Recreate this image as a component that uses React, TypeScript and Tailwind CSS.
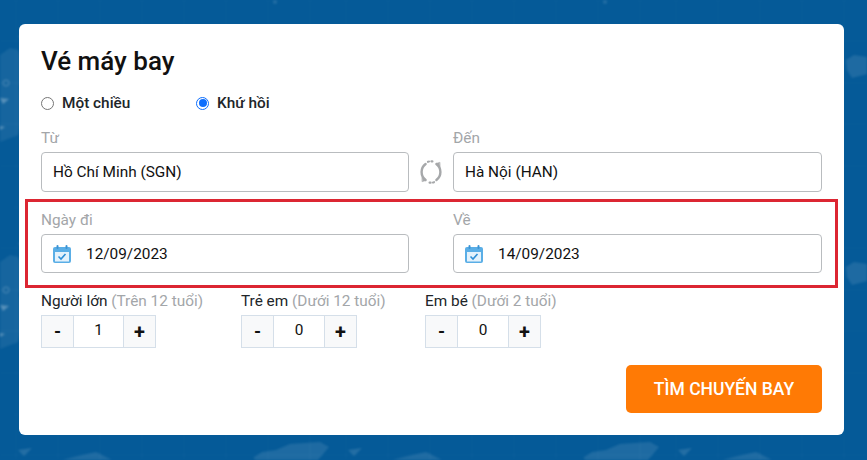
const font = { fontFamily: 'Roboto, "Noto Sans", sans-serif' };

function MapBackground() {
  return (
    <svg className="absolute inset-0" width="867" height="460" viewBox="0 0 867 460">
      <defs>
        <pattern id="map" width="330" height="207" patternUnits="userSpaceOnUse">
          <path d="M0 0H330M0 41H330M0 83H330M0 124H330M0 166H330" stroke="#ffffff" strokeOpacity="0.025" />
          <path d="M16 0V207M58 0V207M100 0V207M142 0V207M184 0V207M226 0V207M268 0V207M310 0V207" stroke="#ffffff" strokeOpacity="0.03" />
          {/* left land mass */}
          <path d="M0 55 L10 48 L18 50 L24 64 L19 88 L24 112 L18 135 L0 142 Z" fill="#ffffff" fillOpacity="0.07" />
          <circle cx="6" cy="83" r="3" fill="none" stroke="#ffffff" strokeOpacity="0.22" />
          <path d="M0 98 L9 99 L3 104 Z M0 126 L5 127 L0 130 Z" fill="#ffffff" fillOpacity="0.28" />
          {/* right land mass */}
          <path d="M186 60 L194 55 L207 57 L215 66 L207 74 L192 78 L187 70 Z" fill="#ffffff" fillOpacity="0.1" />
          {/* bottom land masses */}
          <path d="M253 44 L262 38 L276 36 L290 30 L320 28 L329 33 L318 46 L300 50 L262 50 Z" fill="#ffffff" fillOpacity="0.1" />
          <path d="M62 46 L78 42 L96 38 L112 46 L100 50 L62 50 Z" fill="#ffffff" fillOpacity="0.1" />
          <path d="M18 36 L32 34 L24 42 Z" fill="#ffffff" fillOpacity="0.12" />
          <circle cx="275" cy="2" r="2" fill="#ffffff" fillOpacity="0.12" />
        </pattern>
      </defs>
      <rect width="867" height="460" fill="url(#map)" className="blur-[1px]" />
    </svg>
  );
}

function CalendarIcon() {
  return (
    <svg width="20" height="20" viewBox="0 0 20 20" className="shrink-0">
      <rect x="1" y="3" width="18" height="16" rx="2" fill="#5aaee6" />
      <rect x="3" y="8" width="14" height="9.5" fill="#e4f2fc" />
      <rect x="4.5" y="1" width="2" height="4" rx="1" fill="#3c94d4" />
      <rect x="13.5" y="1" width="2" height="4" rx="1" fill="#3c94d4" />
      <path d="M6.5 12.5 L9 15 L13.5 10" fill="none" stroke="#2f8fd6" strokeWidth="1.6" />
    </svg>
  );
}

function SwapIcon() {
  return (
    <svg width="24" height="24" viewBox="0 0 24 24" fill="none" stroke="#a6a8aa" strokeLinecap="round">
      <path d="M6.6 20 A10 10 0 0 1 6.6 4" strokeWidth="2.4" />
      <path d="M17.4 4 A10 10 0 0 1 17.4 20" strokeWidth="2.4" />
      <path d="M9 1.8 A10 10 0 0 1 15 1.8" strokeWidth="2.2" strokeDasharray="1 2.4" />
      <path d="M15 22.2 A10 10 0 0 1 9 22.2" strokeWidth="2.2" strokeDasharray="1 2.4" />
      <path d="M3.2 17.5 L6.8 20.6 L3.4 21.6 Z" fill="#a6a8aa" strokeWidth="0.6" />
      <path d="M20.8 6.5 L17.2 3.4 L20.6 2.4 Z" fill="#a6a8aa" strokeWidth="0.6" />
    </svg>
  );
}

function Stepper({ label, hint, value, width, boxWidth }: { label: string; hint: string; value: number; width: string; boxWidth: string }) {
  return (
    <div className={width}>
      <div className="text-[15.36px] leading-[18px] text-[#212529]">
        {label} <span className="text-[#a3a6a9]">{hint}</span>
      </div>
      <div className={`mt-[5px] flex h-[33px] border border-[#d5dfe9] text-[#111] ${boxWidth}`}>
        <div className="flex w-[31px] items-center justify-center bg-[#f8f9fa] text-[18px] font-bold">-</div>
        <div className="flex flex-1 items-center justify-center border-x border-[#d5dfe9] pb-[2px] text-[15.36px]">{value}</div>
        <div className="flex w-[31px] items-center justify-center bg-[#f8f9fa] text-[20px] font-bold">+</div>
      </div>
    </div>
  );
}

function Radio({ label, checked, width }: { label: string; checked?: boolean; width: string }) {
  return (
    <label className={`flex items-center gap-[8px] ${width}`}>
      {checked ? (
        <span className="flex h-[13px] w-[13px] items-center justify-center rounded-full border-[1.5px] border-[#0d6efd] bg-white">
          <span className="h-[8px] w-[8px] rounded-full bg-[#0d6efd]" />
        </span>
      ) : (
        <span className="h-[13px] w-[13px] rounded-full border border-[#767676] bg-white" />
      )}
      <span className="pt-[2px] text-[15.36px] font-medium text-[#212529]">{label}</span>
    </label>
  );
}

function Field({ label, value, date, width }: { label: string; value: string; date?: boolean; width: string }) {
  return (
    <div className={width}>
      <div className="text-[15.36px] leading-[18px] text-[#a3a6a9]">{label}</div>
      <div className={`mt-[5px] flex items-center rounded-[4px] border border-[#b9bcbf] text-[15.36px] text-[#111] ${date ? 'h-[39px] pl-[10px]' : 'h-[40px] pl-[11px]'}`}>
        {date && <span className="mr-[14px] flex"><CalendarIcon /></span>}
        <span className="pt-[2px]">{value}</span>
      </div>
    </div>
  );
}

export default function App() {
  return (
    <div style={font} className="relative h-[460px] w-[867px] overflow-hidden bg-[#055a98] px-[19px] pt-[24px]">
      <MapBackground />
      <div className="relative h-[411px] w-[825px] rounded-[6px] bg-white px-[22px] pt-[21px]">
        <h1 className="text-[26px] font-medium leading-[32px] text-[#111]">Vé máy bay</h1>
        <div className="mt-[16px] flex h-[20px] items-center">
          <Radio label="Một chiều" width="w-[155px]" />
          <Radio label="Khứ hồi" checked width="w-[120px]" />
        </div>
        <div className="mt-[16px] flex items-end">
          <Field label="Từ" value="Hồ Chí Minh (SGN)" width="w-[368px]" />
          <div className="flex h-[40px] w-[44px] items-center justify-center"><SwapIcon /></div>
          <Field label="Đến" value="Hà Nội (HAN)" width="w-[369px]" />
        </div>
        <div className="-mx-[16px] mt-[7px] flex h-[89px] border-[3px] border-[#dc2632] px-[13px] pt-[9px]">
          <Field label="Ngày đi" value="12/09/2023" date width="w-[368px]" />
          <div className="w-[44px]" />
          <Field label="Về" value="14/09/2023" date width="w-[369px]" />
        </div>
        <div className="mt-[4px] flex">
          <Stepper label="Người lớn" hint="(Trên 12 tuổi)" value={1} width="w-[200px]" boxWidth="w-[115px]" />
          <Stepper label="Trẻ em" hint="(Dưới 12 tuổi)" value={0} width="w-[184px]" boxWidth="w-[116px]" />
          <Stepper label="Em bé" hint="(Dưới 2 tuổi)" value={0} width="w-[150px]" boxWidth="w-[116px]" />
        </div>
        <div className="mt-[17px] flex justify-end">
          <button className="h-[48px] w-[196px] rounded-[5px] bg-[#ff7a05] text-[17.5px] font-medium text-white">TÌM CHUYẾN BAY</button>
        </div>
      </div>
    </div>
  );
}
